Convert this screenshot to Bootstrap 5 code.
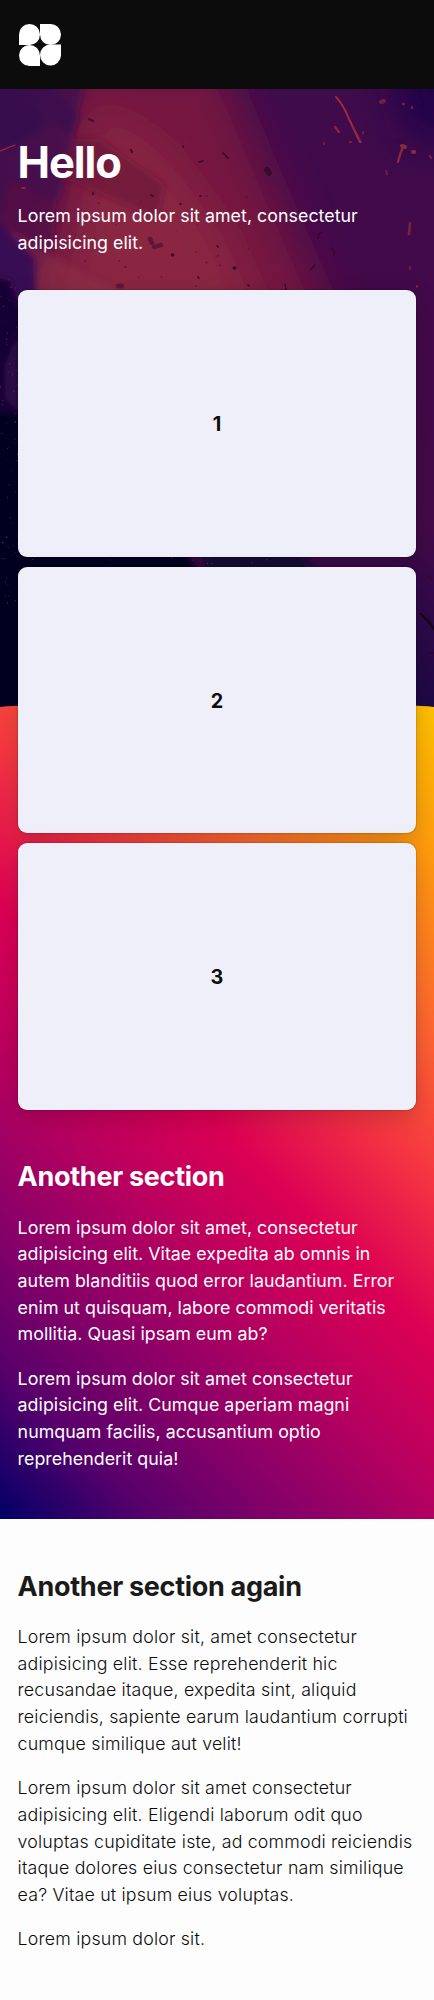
<!DOCTYPE html>
<html lang="en">
<head>
<meta charset="utf-8">
<meta name="viewport" content="width=device-width, initial-scale=1">
<title>Hello</title>
<link rel="stylesheet" href="https://cdn.jsdelivr.net/npm/bootstrap@5.3.0/dist/css/bootstrap.min.css">
<style>
  body { font-family: Inter, "Liberation Sans", sans-serif; font-size: 17.78px; line-height: 26.67px; letter-spacing: .05px; color: #1a1a1a; background: #fdfdfd; }
  .container-fluid { padding-inline: 17.6px; }
  .site-header { height: 89px; background: #0c0c0c; }
  .logo { width: 42px; height: 42px; margin-left: 1.6px; }
  h1, h2 { font-weight: 700; }
  h1 { font-size: 43.5px; line-height: 52px; letter-spacing: -1.1px; margin-bottom: 14.9px; }
  h2 { font-size: 27px; line-height: 34px; letter-spacing: -.3px; margin-bottom: 20.5px; }
  p { margin-bottom: 17.8px; }

  .hero-art { height: 640px; overflow: hidden; }
  .hero-text { padding-top: 47.2px; margin-bottom: 33.8px; }
  .glow { height: 815px; border-radius: 50% 50% 0 0 / 3px; background: linear-gradient(45deg,
      hsl(240deg 100% 20%) 0%, hsl(289deg 100% 21%) 11%, hsl(315deg 100% 27%) 22%,
      hsl(329deg 100% 36%) 33%, hsl(337deg 100% 43%) 44%, hsl(357deg 91% 59%) 56%,
      hsl(17deg 100% 59%) 67%, hsl(34deg 100% 53%) 78%, hsl(45deg 100% 50%) 89%,
      hsl(55deg 100% 50%) 100%) bottom / 100% 955px no-repeat; }
  .front { z-index: 1; }
  .stage { height: 1430px; }

  .tiles { gap: 10px; padding-bottom: 50.2px; }
  .tile { height: 266.55px; padding-top: 2px; border-radius: 9px; background: #efeffa; color: #0c0c0c; font-size: 19.8px; font-weight: 700; letter-spacing: 0; box-shadow: 0 8px 24px rgba(0,0,0,.17), 0 0 2px rgba(0,0,0,.4); }
  .plain { padding-top: 50.5px; font-weight: 300; letter-spacing: .19px; color: #0c0c0c; }
  .plain h2 { color: #1a1a1a; letter-spacing: -.3px; }
</style>
</head>
<body>
<header class="site-header d-flex align-items-center">
  <div class="container-fluid d-flex">
    <svg class="logo" viewBox="0 0 42 42" fill="#fff" aria-label="Logo">
      <path d="M0 21V10.5A10.5 10.5 0 1 1 10.5 21Z"/>
      <path d="M21 0H31.5A10.5 10.5 0 1 1 21 10.5Z"/>
      <path d="M21 42H10.5A10.5 10.5 0 1 1 21 31.5Z"/>
      <path d="M42 20.5V31.5A10.5 10.5 0 1 1 31.5 20.5Z"/>
    </svg>
  </div>
</header>

<main class="stage position-relative">
  <div class="hero-art position-absolute top-0 start-0 w-100">
    <svg class="d-block" width="100%" height="640" viewBox="0 0 434 640" preserveAspectRatio="none">
      <defs>
        <linearGradient id="base" x1="0" y1="0" x2="0" y2="1">
          <stop offset="0" stop-color="#3f0b4b"/><stop offset=".35" stop-color="#43094a"/>
          <stop offset=".68" stop-color="#430a47"/><stop offset=".78" stop-color="#35094a"/><stop offset="1" stop-color="#180943"/>
        </linearGradient>
        <filter id="soft" x="-50%" y="-50%" width="200%" height="200%"><feGaussianBlur stdDeviation="22"/></filter>
        <filter id="haze" x="-20%" y="-20%" width="140%" height="140%"><feGaussianBlur stdDeviation="3.5"/></filter>
        <filter id="fine" x="-20%" y="-20%" width="140%" height="140%"><feGaussianBlur stdDeviation=".4"/></filter>
      </defs>
      <rect width="434" height="640" fill="url(#base)"/>
      <!-- warm smoke -->
      <g filter="url(#soft)">
        <path d="M60-30H220L270 90 340 250H-10L50 110Z" fill="#741640"/>
        <path d="M95 20L160 60 220 140 265 240H60Z" fill="#8a2643"/>
        <path d="M390-30H470V50H410Z" fill="#1b0649"/>
      </g>
      <!-- light beams and shaded patches on the left -->
      <g filter="url(#haze)">
        <path d="M-10-10H86L70 60 60 110 0 125-10 130Z" fill="#440d4c" opacity=".85"/>
        <path d="M-10-10H45L80 30 70 45 20 10Z" fill="#390c4e" opacity=".7"/>
        <path d="M-10-10H10L50 35 10 60H-10Z" fill="#2d0950" opacity=".5"/>
        <path d="M10 90L56 115 53 150 35 195-5 150Z" fill="#560f46" opacity=".85"/>
        <path d="M100 50L165 95 158 130 66 90 72 50Z" fill="#671338" opacity=".6"/>
        <path d="M40 160L140 215H40L10 140Z" fill="#923048" opacity=".5"/>
        <path d="M-10 125L35 168 38 215 0 250Z" fill="#390a52"/>
        <path d="M-10 188L10 192 24 230V330H-10Z" fill="#150535"/>
        <path d="M5 275L20 240V325L5 310Z" fill="#2d084a"/>
        <path d="M-10 325H20L60 400 180 455 200 485H300L280 660H-10Z" fill="#040321"/>
        <path d="M200 450H290L320 490H210Z" fill="#120739"/>
      </g>
      <!-- ember streaks -->
      <g fill="none" stroke="#9f2b3f" stroke-linecap="round" filter="url(#fine)">
        <path d="M336 8Q343 15 349 30L360 53" stroke-width="2"/>
        <path d="M353 37L361 52" stroke="#722043"/>
        <path d="M335 38L339 43" stroke="#882343" stroke-width="2.5"/>
        <path d="M403 58Q400 64 398 73" stroke-width="2.2" stroke="#8c2a3d"/>
        <path d="M402 57L405 58M413 63H414" stroke-width="4" stroke="#8c2a3d"/>
        <path d="M0 62L15 56" stroke-width="1.3"/>
        <path d="M381 13L384 12" stroke-width="4" stroke="#70213d"/>
        <path d="M403 15H404M412 18V19M386 82L387 85M324 54V55M430 67L431 69M410 178V180M363 43V44" stroke-width="2.4" stroke="#6d1d42"/>
        <path d="M410 134L409 145" stroke-width="2.6" stroke="#7a2142"/>
        <path d="M350 53H351M360 53H361M417 197V198M22 99H25" stroke-width="1.6"/>
      </g>
      <!-- dark debris -->
      <g fill="none" stroke="#330827" stroke-linecap="round" filter="url(#fine)">
        <path d="M267 81L269 84" stroke-width="5.5" stroke="#34092f"/>
        <path d="M89 30L93 32M131 61L132 63M151 106L153 107M93 104V105" stroke-width="2.4" stroke="#4a1030"/>
        <path d="M154 158L161 156M118 197H122M150 150L152 154" stroke-width="4.4" stroke="#5f1536"/>
        <path d="M234 179H235M172 166H173" stroke-width="2.8"/>
        <path d="M183 57V58M199 73L203 72M223 64L228 69M198 188L199 189M217 157L218 158M248 196L249 197M200 107H201M180 115H181" stroke-width="1.5"/>
        <path d="M318 149Q318 144 323 143M332 159Q335 162 334 166M310 181L315 176M285 195L287 207M125 178H126" stroke-width="1.1"/>
        <path d="M421 525L428 532 434 540" stroke="#14041b" stroke-width="2.2"/>
        <path d="M429 488L431 490M430 564H434" stroke-width="1.3"/>
      </g>
      <g id="dust"></g>
    </svg>
  </div>
  <div class="glow position-absolute bottom-0 start-0 w-100"></div>

  <div class="front position-relative container-fluid">
    <div class="hero-text text-white">
      <h1>Hello</h1>
      <p class="mb-0">Lorem ipsum dolor sit amet, consectetur<br>adipisicing elit.</p>
    </div>
    <div class="tiles d-flex flex-column">
      <div class="tile d-flex align-items-center justify-content-center">1</div>
      <div class="tile d-flex align-items-center justify-content-center">2</div>
      <div class="tile d-flex align-items-center justify-content-center">3</div>
    </div>
    <section class="text-white">
      <h2>Another section</h2>
      <p>Lorem ipsum dolor sit amet, consectetur<br>adipisicing elit. Vitae expedita ab omnis in<br>autem blanditiis quod error laudantium. Error<br>enim ut quisquam, labore commodi veritatis<br>mollitia. Quasi ipsam eum ab?</p>
      <p class="mb-0">Lorem ipsum dolor sit amet consectetur<br>adipisicing elit. Cumque aperiam magni<br>numquam facilis, accusantium optio<br>reprehenderit quia!</p>
    </section>
  </div>
</main>

<section class="plain container-fluid">
  <h2>Another section again</h2>
  <p>Lorem ipsum dolor sit, amet consectetur<br>adipisicing elit. Esse reprehenderit hic<br>recusandae itaque, expedita sint, aliquid<br>reiciendis, sapiente earum laudantium corrupti<br>cumque similique aut velit!</p>
  <p>Lorem ipsum dolor sit amet consectetur<br>adipisicing elit. Eligendi laborum odit quo<br>voluptas cupiditate iste, ad commodi reiciendis<br>itaque dolores eius consectetur nam similique<br>ea? Vitae ut ipsum eius voluptas.</p>
  <p class="mb-0">Lorem ipsum dolor sit.</p>
</section>

<script>
  // Fine dust: pink sparks down the left edge, dark grit over the smoke.
  let seed = 11;
  const rnd = () => (seed = (seed * 16807) % 2147483647) / 2147483647;
  let dots = '';
  for (let i = 0; i < 90; i++)
    dots += `<circle cx="${(rnd() * 18).toFixed(1)}" cy="${(190 + rnd() * 330).toFixed(1)}" r="${(.3 + rnd() * .5).toFixed(2)}" fill="#8b2d6d" opacity="${(.3 + rnd() * .6).toFixed(2)}"/>`;
  for (let i = 0; i < 10; i++)
    dots += `<circle cx="${(rnd() * 270).toFixed(1)}" cy="${(469 + rnd() * 7).toFixed(1)}" r=".5" fill="#7a4070"/>`;
  for (let i = 0; i < 35; i++)
    dots += `<circle cx="${(80 + rnd() * 180).toFixed(1)}" cy="${(100 + rnd() * 100).toFixed(1)}" r="${(.3 + rnd() * .6).toFixed(2)}" fill="#3e0a2c" opacity=".6"/>`;
  document.getElementById('dust').innerHTML = dots;
</script>
<script src="https://cdn.jsdelivr.net/npm/bootstrap@5.3.0/dist/js/bootstrap.bundle.min.js"></script>
</body>
</html>
